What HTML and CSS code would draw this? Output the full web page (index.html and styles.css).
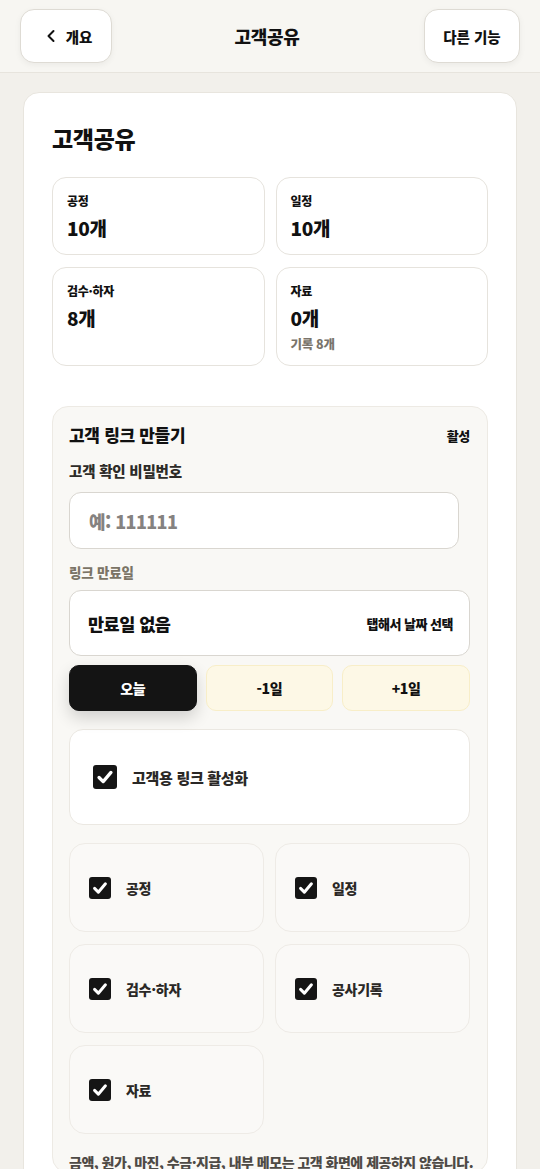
FILE: index.html
```html
<!DOCTYPE html>
<html lang="ko">
<head>
<meta charset="utf-8">
<meta name="viewport" content="width=device-width, initial-scale=1">
<title>고객공유</title>
<link rel="stylesheet" href="styles.css">
</head>
<body>
<header class="topbar">
  <button class="nav-btn back-btn" type="button">
    <svg class="chev" viewBox="0 0 12 14" width="12" height="14" aria-hidden="true"><path d="M8.5 2 L3.5 7 L8.5 12" fill="none" stroke="#111" stroke-width="2" stroke-linecap="round" stroke-linejoin="round"/></svg>
    <span>개요</span>
  </button>
  <h1 class="topbar-title">고객공유</h1>
  <button class="nav-btn more-btn" type="button">다른 기능</button>
</header>

<main class="page">
  <section class="card">
    <h2 class="card-title">고객공유</h2>

    <div class="stats">
      <div class="stat">
        <div class="stat-label">공정</div>
        <div class="stat-value">10개</div>
      </div>
      <div class="stat">
        <div class="stat-label">일정</div>
        <div class="stat-value">10개</div>
      </div>
      <div class="stat">
        <div class="stat-label">검수·하자</div>
        <div class="stat-value">8개</div>
      </div>
      <div class="stat">
        <div class="stat-label">자료</div>
        <div class="stat-value">0개</div>
        <div class="stat-sub">기록 8개</div>
      </div>
    </div>

    <div class="panel">
      <div class="panel-head">
        <h3 class="panel-title">고객 링크 만들기</h3>
        <span class="panel-status">활성</span>
      </div>

      <label class="field-label">고객 확인 비밀번호</label>
      <div class="input-box"><span class="placeholder">예: 111111</span></div>

      <div class="sub-label">링크 만료일</div>
      <div class="date-box">
        <span class="date-value">만료일 없음</span>
        <span class="date-hint">탭해서 날짜 선택</span>
      </div>

      <div class="quick">
        <button class="quick-btn is-active" type="button">오늘</button>
        <button class="quick-btn" type="button">-1일</button>
        <button class="quick-btn" type="button">+1일</button>
      </div>

      <div class="enable-card">
        <span class="check check-lg"><svg viewBox="0 0 24 24" aria-hidden="true"><path d="M5.5 12.5 L10 17 L18.5 7" fill="none" stroke="#fff" stroke-width="3.6" stroke-linecap="round" stroke-linejoin="round"/></svg></span>
        <span class="enable-label">고객용 링크 활성화</span>
      </div>

      <div class="opts">
        <div class="opt">
          <span class="check"><svg viewBox="0 0 24 24" aria-hidden="true"><path d="M5.5 12.5 L10 17 L18.5 7" fill="none" stroke="#fff" stroke-width="3.6" stroke-linecap="round" stroke-linejoin="round"/></svg></span>
          <span class="opt-label">공정</span>
        </div>
        <div class="opt">
          <span class="check"><svg viewBox="0 0 24 24" aria-hidden="true"><path d="M5.5 12.5 L10 17 L18.5 7" fill="none" stroke="#fff" stroke-width="3.6" stroke-linecap="round" stroke-linejoin="round"/></svg></span>
          <span class="opt-label">일정</span>
        </div>
        <div class="opt">
          <span class="check"><svg viewBox="0 0 24 24" aria-hidden="true"><path d="M5.5 12.5 L10 17 L18.5 7" fill="none" stroke="#fff" stroke-width="3.6" stroke-linecap="round" stroke-linejoin="round"/></svg></span>
          <span class="opt-label">검수·하자</span>
        </div>
        <div class="opt">
          <span class="check"><svg viewBox="0 0 24 24" aria-hidden="true"><path d="M5.5 12.5 L10 17 L18.5 7" fill="none" stroke="#fff" stroke-width="3.6" stroke-linecap="round" stroke-linejoin="round"/></svg></span>
          <span class="opt-label">공사기록</span>
        </div>
        <div class="opt">
          <span class="check"><svg viewBox="0 0 24 24" aria-hidden="true"><path d="M5.5 12.5 L10 17 L18.5 7" fill="none" stroke="#fff" stroke-width="3.6" stroke-linecap="round" stroke-linejoin="round"/></svg></span>
          <span class="opt-label">자료</span>
        </div>
      </div>

      <p class="note">금액, 원가, 마진, 수금·지급, 내부 메모는 고객 화면에 제공하지 않습니다.</p>
    </div>
  </section>
</main>
</body>
</html>
```

FILE: styles.css
```css
* { box-sizing: border-box; }

html, body {
  margin: 0;
  padding: 0;
}

body {
  background: #f2f0eb;
  font-family: "Noto Sans CJK KR", "Noto Sans", sans-serif;
  color: #111;
  letter-spacing: -0.3px;
}

h1, h2, h3, p { margin: 0; }

button {
  font-family: inherit;
  letter-spacing: inherit;
  cursor: pointer;
}

/* top bar */
.topbar {
  height: 73px;
  padding: 9px 20px 0;
  background: #f7f6f2;
  border-bottom: 1px solid #e7e4dd;
  display: flex;
  align-items: flex-start;
  justify-content: space-between;
}

.nav-btn {
  height: 54px;
  background: #fff;
  border: 1px solid #dedbd4;
  border-radius: 14px;
  box-shadow: 0 2px 6px rgba(0, 0, 0, 0.05);
  font-size: 14.5px;
  font-weight: 800;
  color: #111;
  letter-spacing: 0;
  display: flex;
  align-items: center;
  justify-content: center;
  gap: 9px;
}

.back-btn { width: 92px; padding: 0 0 0 5px; }
.more-btn { width: 96px; padding: 0; }

.chev { display: block; }

.topbar-title {
  font-size: 18px;
  font-weight: 900;
  line-height: 54px;
  margin-left: -2px;
}

/* page */
.page {
  padding: 19px 23px 0;
}

.card {
  background: #fff;
  border: 1px solid #e8e5de;
  border-radius: 16px;
  padding: 29px 28px 24px;
}

.card-title {
  font-size: 23px;
  font-weight: 900;
  line-height: 32px;
}

/* stats */
.stats {
  margin-top: 23px;
  display: grid;
  grid-template-columns: 1fr 1fr;
  column-gap: 11px;
  row-gap: 12px;
}

.stat {
  border: 1px solid #e6e3dd;
  border-radius: 14px;
  padding: 14px 14px 12px;
}

.stat-label {
  font-size: 12px;
  font-weight: 800;
  line-height: 18px;
}

.stat-value {
  margin-top: 4px;
  font-size: 19px;
  font-weight: 900;
  line-height: 28px;
}

.stat-sub {
  margin-top: 3px;
  font-size: 12.5px;
  font-weight: 800;
  line-height: 18px;
  color: #7a746b;
}

/* panel */
.panel {
  margin-top: 40px;
  background: #f9f8f5;
  border: 1px solid #edeae4;
  border-radius: 16px;
  padding: 16px 17px 0 16px;
}

.panel-head {
  display: flex;
  align-items: center;
  justify-content: space-between;
  height: 24px;
}

.panel-title {
  font-size: 17px;
  font-weight: 900;
  line-height: 24px;
}

.panel-status {
  font-size: 13px;
  font-weight: 900;
}

.field-label {
  display: block;
  margin-top: 14px;
  font-size: 14.5px;
  font-weight: 800;
  line-height: 20px;
  color: #2d2b28;
  letter-spacing: -0.2px;
}

.input-box {
  margin-top: 11px;
  width: 390px;
  height: 57px;
  background: #fff;
  border: 1px solid #d9d6d0;
  border-radius: 12px;
  padding: 0 19px;
  display: flex;
  align-items: center;
}

.placeholder {
  font-size: 18px;
  font-weight: 800;
  color: #858280;
  letter-spacing: -0.6px;
}

.sub-label {
  margin-top: 14px;
  font-size: 13.5px;
  font-weight: 800;
  line-height: 18px;
  color: #7b7466;
  letter-spacing: -0.2px;
}

.date-box {
  margin-top: 9px;
  height: 66px;
  background: #fff;
  border: 1px solid #d9d6d0;
  border-radius: 12px;
  padding: 0 16px 0 18px;
  display: flex;
  align-items: center;
  justify-content: space-between;
}

.date-value {
  font-size: 17.5px;
  font-weight: 900;
  letter-spacing: -0.5px;
}

.date-hint {
  font-size: 13px;
  font-weight: 900;
  letter-spacing: -0.5px;
}

.quick {
  margin-top: 9px;
  display: grid;
  grid-template-columns: repeat(3, 1fr);
  gap: 9px;
}

.quick-btn {
  height: 46px;
  border-radius: 10px;
  border: 1px solid #f8eec8;
  background: #fdf8e6;
  color: #111;
  font-size: 14px;
  font-weight: 900;
}

.quick-btn.is-active {
  background: #141414;
  border-color: #141414;
  color: #fff;
  box-shadow: 0 7px 16px rgba(0, 0, 0, 0.16);
}

/* checkboxes */
.check {
  flex: none;
  width: 22px;
  height: 22px;
  border-radius: 3px;
  background: #151515;
  display: flex;
  align-items: center;
  justify-content: center;
}

.check svg { width: 20px; height: 20px; display: block; }

.check-lg { width: 24px; height: 24px; }
.check-lg svg { width: 22px; height: 22px; }

.enable-card {
  margin-top: 18px;
  height: 96px;
  background: #fff;
  border: 1px solid #ebe8e2;
  border-radius: 14px;
  padding: 0 0 0 23px;
  display: flex;
  align-items: center;
  gap: 15px;
}

.enable-label {
  font-size: 15px;
  font-weight: 800;
  color: #2a2826;
  letter-spacing: -0.3px;
}

.opts {
  margin-top: 18px;
  display: grid;
  grid-template-columns: 1fr 1fr;
  column-gap: 11px;
  row-gap: 12px;
}

.opt {
  height: 89px;
  background: #faf9f7;
  border: 1px solid #eeebe6;
  border-radius: 16px;
  padding-left: 19px;
  display: flex;
  align-items: center;
  gap: 15px;
}

.opt-label {
  font-size: 14px;
  font-weight: 800;
  color: #2a2826;
}

.note {
  margin-top: 18px;
  font-size: 14px;
  font-weight: 800;
  line-height: 20px;
  color: #4e4a45;
  letter-spacing: -0.5px;
  white-space: nowrap;
}
```
